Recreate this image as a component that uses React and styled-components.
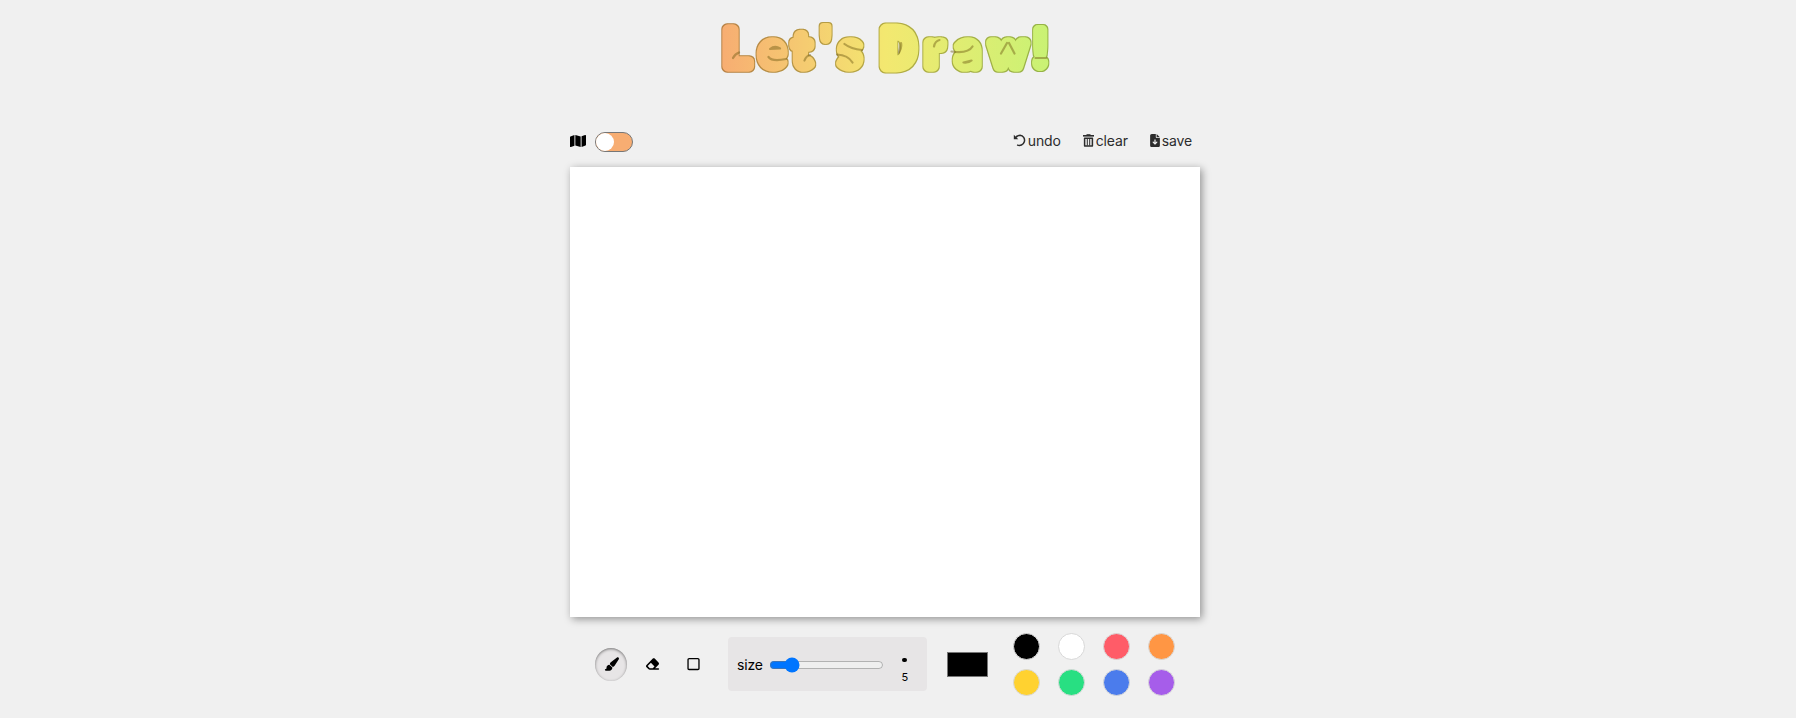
import React, { useState } from "react";
import styled, { createGlobalStyle } from "styled-components";
import { FaMap, FaFileArrowDown, FaPaintbrush, FaEraser, FaRegSquare } from "react-icons/fa6";

const GlobalStyle = createGlobalStyle`
  * { box-sizing: border-box; }
  body { margin: 0; background: #f0f0f0; color: #000; font-family: Inter, sans-serif; overflow: hidden; }
`;

const Page = styled.main`
  width: 630px;
  height: 718px;
  margin-left: 570px;
  display: flex;
  flex-direction: column;
`;

const Header = styled.header`
  height: 117px;
  padding: 15px 0 0 141px;
`;

const Title = styled.h1`
  margin: 0;
  width: 350px;
  height: 70px;
  svg { display: block; overflow: visible; }
`;

const Letters = styled.text`
  font-family: Lato, sans-serif;
  font-weight: 400;
  font-size: 44px;
  fill: url(#sunset);
  stroke: url(#sunset);
  stroke-width: 11.5px;
  stroke-linejoin: round;
  filter: url(#outline);
  .cap { font-size: 50px; }
  .round { font-family: Roboto, sans-serif; stroke-width: 13px; }
  .tick { stroke-width: 8px; }
  .bang { stroke-width: 10px; }
`;

const Creases = styled.path`
  fill: none;
  stroke: rgba(110, 90, 20, 0.45);
  stroke-width: 2.2px;
  stroke-linecap: round;
  stroke-linejoin: round;
`;

const TopBar = styled.div`
  height: 50px;
  display: flex;
  justify-content: space-between;
  padding: 0 8px 0 0;
`;

const MapToggle = styled.div`
  display: flex;
  align-items: center;
  gap: 9px;
  height: 50px;
  > svg { margin-top: -2px; }
`;

const Button = styled.button`
  font: inherit;
  border: 0;
  padding: 0;
  background: none;
  color: inherit;
  cursor: pointer;
`;

const Switch = styled(Button)`
  width: 38px;
  height: 20px;
  border: 1px solid #777;
  border-radius: 10px;
  background: #f7ad72;
  display: flex;
  justify-content: ${(p) => (p.$on ? "flex-end" : "flex-start")};
`;

const Knob = styled.span`
  width: 18px;
  height: 18px;
  border-radius: 50%;
  background: #fff;
`;

const Actions = styled.div`
  display: flex;
  gap: 22px;
  height: 48px;
  align-items: center;
`;

const Action = styled(Button)`
  display: flex;
  align-items: center;
  gap: 2px;
  color: #2c2c2c;
  font-size: 14px;
  line-height: 18px;
  letter-spacing: -0.15px;
  svg { width: ${(p) => p.$icon}px; height: 13px; margin-top: -2px; }
`;

const Board = styled.section`
  height: 450px;
  flex: none;
  background: #fff;
  box-shadow: 2px 2px 8px rgba(0, 0, 0, 0.4);
`;

const Toolbar = styled.div`
  height: 94px;
  display: flex;
  align-items: center;
  padding-left: 25px;
`;

const Tools = styled.div`
  display: flex;
  gap: 9px;
  width: 133px;
`;

const Tool = styled(Button)`
  width: 32px;
  height: 33px;
  border-radius: 50%;
  display: grid;
  place-items: center;
  flex: none;
  ${(p) => p.$active && "background: #e7e5e6; box-shadow: inset 0 1px 3px rgba(0,0,0,.5);"}
  svg { width: 15px; height: 14px; margin-top: -1px; }
`;

const SizePanel = styled.label`
  width: 199px;
  height: 54px;
  border-radius: 4px;
  background: #e7e5e6;
  display: flex;
  align-items: center;
  padding-left: 9px;
  font-size: 14px;
  letter-spacing: -0.15px;
`;

const Range = styled.input`
  width: 115px;
  height: 16px;
  margin: 1px 0 0 6px;
`;

const Preview = styled.span`
  width: 24px;
  height: 54px;
  margin-left: 9px;
  display: flex;
  flex-direction: column;
  align-items: center;
  padding-top: 21px;
  font-size: 11px;
  line-height: 15px;
`;

const Dot = styled.i`
  width: 5px;
  height: 4px;
  border-radius: 2px;
  background: #000;
  margin-bottom: 8px;
  flex: none;
`;

const Current = styled.div`
  width: 41px;
  height: 25px;
  margin-left: 20px;
  border: 1px solid #767676;
  background: ${(p) => p.$color};
`;

const Palette = styled.div`
  display: grid;
  grid-template-columns: repeat(4, 27px);
  gap: 9px 18px;
  margin-left: 24.5px;
`;

const Swatch = styled(Button)`
  width: 27px;
  height: 27px;
  border-radius: 50%;
  border: 1px solid #d8d8d8;
  background: ${(p) => p.$color};
`;

const UndoIcon = () => (
  <svg viewBox="0 0 13 13">
    <path d="M2.8 3.4C4.2 1.7 5.6 1.2 7 1.2a5.1 5.1 0 1 1-2.9 9.6" fill="none" stroke="currentColor" strokeWidth="1.5" />
    <path d="M.8.8v4.5h4.5z" fill="currentColor" />
  </svg>
);

const TrashIcon = () => (
  <svg viewBox="0 0 11 13" fill="none" stroke="currentColor">
    <path d="M0 1.8h11" strokeWidth="1.6" />
    <path d="M3.5.8h4" strokeWidth="1.2" />
    <path d="M1.6 4.2h7.8v7.9H1.6z" strokeWidth="1.5" strokeLinejoin="round" />
    <path d="M4.3 4.5v7M6.7 4.5v7" strokeWidth="1" />
  </svg>
);

const COLORS = ["#000", "#fff", "#ff5c68", "#ff9644", "#ffd230", "#28df82", "#4b7cec", "#a65dea"];
const TOOLS = [["brush", FaPaintbrush], ["eraser", FaEraser], ["fill", FaRegSquare]];

export default function App() {
  const [on, setOn] = useState(false);
  const [size, setSize] = useState(5);
  const [tool, setTool] = useState("brush");
  const [color, setColor] = useState("#000");
  return (
    <>
      <GlobalStyle />
      <Page>
        <Header>
          <Title>
            <svg width="350" height="70">
              <defs>
                <linearGradient id="sunset" gradientUnits="userSpaceOnUse" x1="10" y1="0" x2="338" y2="0">
                  <stop offset="0" stopColor="#f7ad72" />
                  <stop offset="0.5" stopColor="#f3e870" />
                  <stop offset="1" stopColor="#c9f274" />
                </linearGradient>
                <filter id="outline" x="-5%" y="-20%" width="110%" height="140%" colorInterpolationFilters="sRGB">
                  <feMorphology in="SourceGraphic" operator="dilate" radius="1" result="fat" />
                  <feColorMatrix in="fat" values=".74 0 0 0 0  0 .74 0 0 0  0 0 .6 0 0  0 0 0 1 0" result="edge" />
                  <feMerge><feMergeNode in="edge" /><feMergeNode in="SourceGraphic" /></feMerge>
                </filter>
              </defs>
              <Letters x="12.5 49.5 83 109.5 129.5 160 171 215 246 280 322.5" y="50.5 50.5 50.5 47.5 50.5 50.5 50.5 50.5 50.5 50.5 51">
                <tspan className="cap">L</tspan>et<tspan className="cap tick">'</tspan>s <tspan className="cap round">D</tspan>raw<tspan className="cap bang">!</tspan>
              </Letters>
              <Creases d="M22 43Q24 39 28 37.5M59 34Q64 30 69 33.5ZM57.5 42Q61 47 75 44M93.5 45.5Q95 41 99 40M133.5 29Q140 34 151 35M126 39.5Q137 40 141.5 47.5M190 28Q191 33 188 37.5ZM223 31.5Q224 26 228.5 25M240.5 36.5Q257 39 261.5 31.5M252.5 47.5Q258 48 260.5 45.5ZM290 38.5L296 28M303.5 38.5L298 28M324.5 43H335" />
            </svg>
          </Title>
        </Header>
        <TopBar>
          <MapToggle>
            <FaMap size={16} />
            <Switch $on={on} onClick={() => setOn(!on)} aria-label="map"><Knob /></Switch>
          </MapToggle>
          <Actions>
            <Action $icon={13}><UndoIcon />undo</Action>
            <Action $icon={11}><TrashIcon />clear</Action>
            <Action $icon={10}><FaFileArrowDown />save</Action>
          </Actions>
        </TopBar>
        <Board />
        <Toolbar>
          <Tools>
            {TOOLS.map(([name, Icon]) => (
              <Tool key={name} $active={tool === name} onClick={() => setTool(name)} aria-label={name}><Icon /></Tool>
            ))}
          </Tools>
          <SizePanel>
            size
            <Range type="range" min="1" max="27" value={size} onChange={(e) => setSize(+e.target.value)} />
            <Preview><Dot />{size}</Preview>
          </SizePanel>
          <Current $color={color} />
          <Palette>
            {COLORS.map((c) => <Swatch key={c} $color={c} onClick={() => setColor(c)} aria-label={c} />)}
          </Palette>
        </Toolbar>
      </Page>
    </>
  );
}
